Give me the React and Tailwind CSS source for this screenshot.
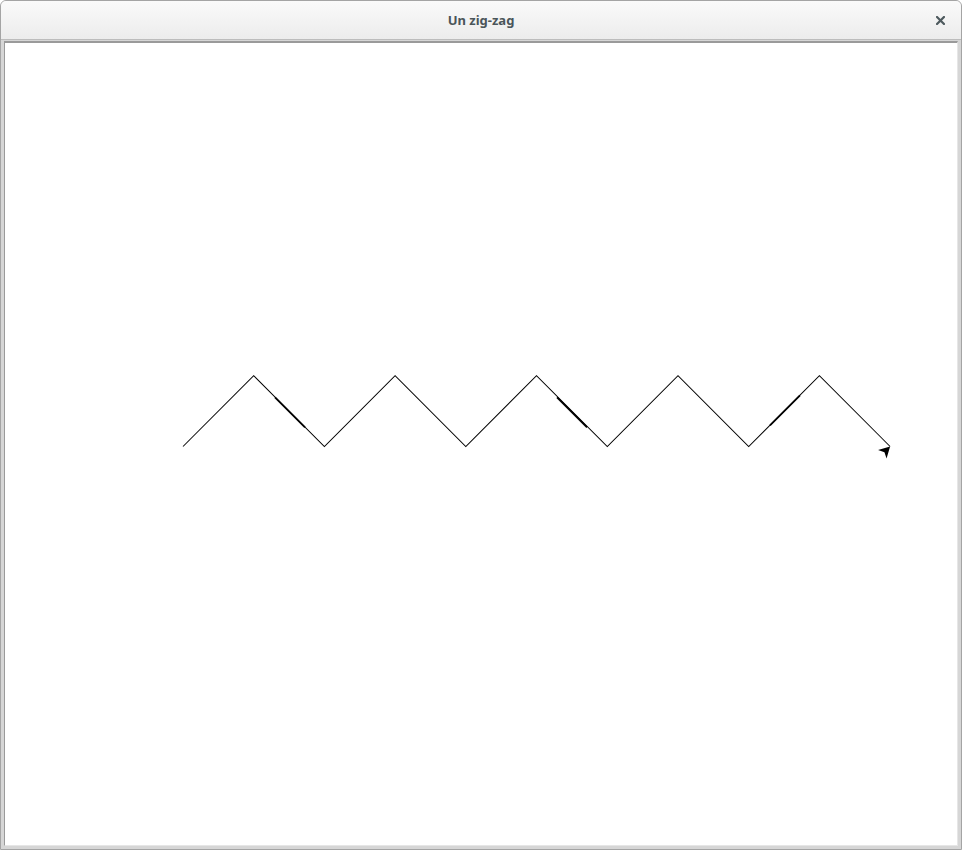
import React from "react";

// turtle path: 45° segments of length 100 starting at (183,446)
const step = 70.71;
const points = Array.from({ length: 11 }, (_, i) => [
  183 + i * step,
  i % 2 === 0 ? 446 : 446 - step,
]);

function ZigZag() {
  const d = points.map(([x, y], i) => `${i ? "L" : "M"}${x.toFixed(1)} ${y.toFixed(1)}`).join(" ");
  const [tx, ty] = points[points.length - 1];
  return (
    <svg className="block w-full h-full" viewBox="5 43 952 801" preserveAspectRatio="none">
      <path d={d} fill="none" stroke="#000" strokeWidth="1" />
      {/* doubled-up bits where the line was drawn over */}
      <path d="M275 397 L305 427" stroke="#000" strokeWidth="1.8" />
      <path d="M557 397 L587 427" stroke="#000" strokeWidth="1.8" />
      <path d="M770 425 L800 395" stroke="#000" strokeWidth="1.8" />
      <polygon
        points="0,0 -11,6 -8,0 -11,-6"
        fill="#000"
        transform={`translate(${tx.toFixed(1)} ${ty}) rotate(-45)`}
      />
    </svg>
  );
}

export default function App() {
  return (
    <div className="w-[962px] h-[850px] flex flex-col bg-[#d6d6d6] border border-[#a4a4a4] rounded-t-[6px] overflow-hidden">
      <div className="h-[39px] shrink-0 flex items-center relative bg-gradient-to-b from-[#fafafa] to-[#ececec] border-b border-[#bcbcbc]">
        <div
          className="flex-1 text-center text-[13px] font-bold text-[#4a5559] pt-[1px]"
          style={{ fontFamily: '"Noto Sans", "DejaVu Sans", sans-serif' }}
        >
          Un zig-zag
        </div>
        <svg className="absolute right-[16px] top-[15px]" width="9" height="9" viewBox="0 0 9 9">
          <path d="M1 1 L8 8 M8 1 L1 8" stroke="#4e5a5e" strokeWidth="2.2" strokeLinecap="square" />
        </svg>
      </div>
      <div className="flex-1 flex flex-col px-[3px] pb-[3px] pt-[1px] bg-[#d6d6d6]">
        <div className="flex-1 bg-white border-t-2 border-l border-[#9a9a9a] border-r border-b border-r-[#e6e6e6] border-b-[#e6e6e6]">
          <ZigZag />
        </div>
      </div>
    </div>
  );
}
